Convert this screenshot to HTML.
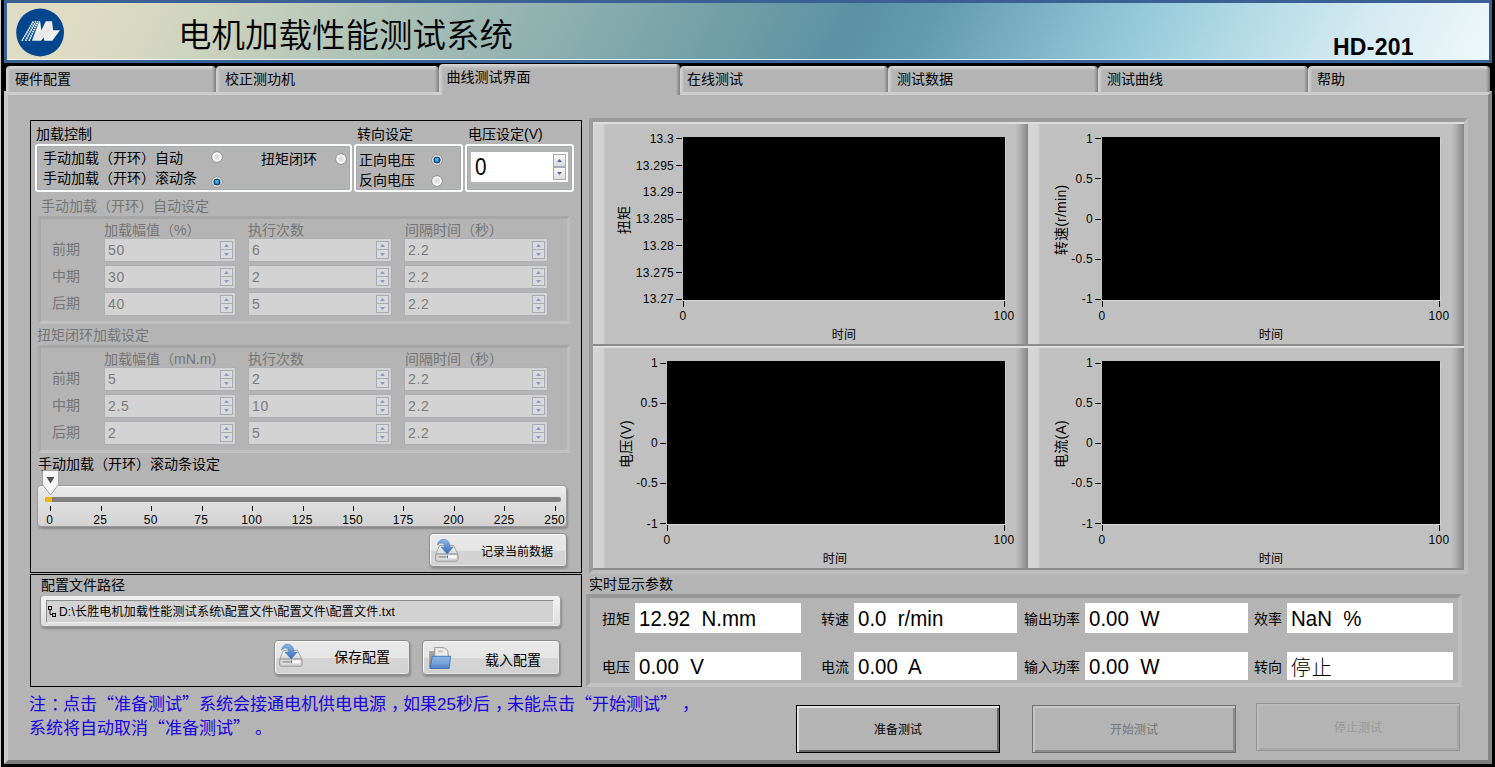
<!DOCTYPE html><html lang="zh-CN"><head><meta charset="utf-8"><title>电机加载性能测试系统</title><style>
*{box-sizing:border-box;margin:0;padding:0}
html,body{width:1495px;height:767px;overflow:hidden;background:#000}
body{text-spacing-trim:space-all;position:relative;font-family:"Liberation Sans","Noto Sans CJK SC",sans-serif;font-size:14px;color:#000}
.a{position:absolute}
.t{position:absolute;white-space:pre;line-height:1;font-size:14px}
.d{color:#747474}
.tab{position:absolute;top:66px;height:26px;border-radius:4px 4px 0 0;padding:4px 3px 0 4px;background:linear-gradient(90deg,#d6d6d6 0,#c8c8c8 2px,rgba(180,180,180,0) 4.5px),linear-gradient(270deg,#7e7e7e 0,#989898 2px,rgba(180,180,180,0) 4px),linear-gradient(#d8d8d8 0,#cacaca 2px,#b9b9b9 4px,#b4b4b4 5px)}
.tab span{position:absolute;margin:4px 0 0 4px;left:5px;top:2px;font-size:14px;line-height:1;white-space:nowrap}
.box{position:absolute;border:1px solid #000}
.grp{position:absolute;border:2px solid #fbfdfe;border-radius:3px;box-shadow:inset 0 0 0 1px #a9acae}
.sunk{position:absolute;background:#b4b4b4;border-top:3px solid #a6a6a6;border-left:3px solid #a9a9a9;border-bottom:3px solid #c2c2c2;border-right:3px solid #bebebe}
.din{position:absolute;height:22px;background:#d3d3d3;box-shadow:0 0 0 1px #adafb2}
.din span{position:absolute;left:3px;top:4px;font-size:14px;line-height:1;color:#7a7a7a;letter-spacing:0.6px}
.sp{position:absolute;width:13px;height:18px;right:2px;top:2px}
.btn{position:absolute;border-radius:4px;border:1px solid #8c8c8c;background:linear-gradient(#e9e9e9 0,#e5e5e5 51%,#d4d4d4 53%,#d2d2d2 100%);box-shadow:inset 1px 1px 0 #fbfbfb,inset -1px -1px 0 #e4e4e4,1px 2px 2px rgba(0,0,0,.22)}
.wb{position:absolute;background:#fff;height:29px}
.wb span{position:absolute;left:4px;top:4px;font-size:22px;line-height:1;white-space:pre;transform:scaleX(.93);transform-origin:0 0}
.wb span.stp{font-weight:300;font-size:20px;letter-spacing:1px;transform:none}
.chart{position:absolute;background:#c0c0c0}
q{font-family:"Noto Sans CJK SC",sans-serif;quotes:none}q::before,q::after{content:none}q.pc{position:relative;left:5px}
.tk{position:absolute;font-size:12px;line-height:1;white-space:nowrap;letter-spacing:0.25px}
.bb{position:absolute;background:#b4b4b4;font-size:12px;text-align:center}
</style></head><body>
<svg width="0" height="0" style="position:absolute"><defs><radialGradient id="rg" cx="50%" cy="45%" r="60%"><stop offset="0" stop-color="#d6d6d6"/><stop offset="1" stop-color="#f2f2f2"/></radialGradient><radialGradient id="rb" cx="45%" cy="40%" r="60%"><stop offset="0" stop-color="#58c4fa"/><stop offset="1" stop-color="#1478c0"/></radialGradient></defs></svg>
<div class="a" style="left:0;top:0;width:1px;height:767px;background:#cfcfcf"></div>
<div class="a" id="banner" style="left:4px;top:0;width:1488px;height:63px;border:3px solid #3a6094;background:linear-gradient(118deg,#e0dcc4 0%,#dfdcc4 5%,#d9d9c2 9%,#cdd3be 14%,#bdcaba 20%,#a9bfb5 27%,#99b6b1 33%,#82a8ab 41.7%,#6c9ca6 50%,#5a92a3 56.5%,#639cad 62%,#7db4c5 69%,#96cbda 76%,#b4dae6 82.6%,#d7ecf2 91.6%,#f0f8fa 100%)"><div class="a" style="left:0;right:0;bottom:0;height:1px;background:#f4f8fa"></div></div>
<svg class="a" style="left:14px;top:6px" width="54" height="54" viewBox="14 6 54 54"><circle cx="40.1" cy="32.5" r="23.9" fill="#00468e"/><defs><linearGradient id="lg" x1="0" y1="0" x2="1" y2="1"><stop offset="0" stop-color="#ffffff"/><stop offset="0.5" stop-color="#e6e6e6"/><stop offset="1" stop-color="#ffffff"/></linearGradient></defs><polygon fill="url(#lg)" points="31.9,40.8 39.2,21.2 40.1,21.2 41.4,30.2 45.8,21.2 52,21.2 53.2,30.2 60,30.2 52.3,40.8 44.3,40.8 43.7,37.5 41,40.8"/><g stroke="#fff" stroke-width="1.6" stroke-dasharray="1.7 0.6"><line x1="22" y1="40.8" x2="33.6" y2="21.2"/><line x1="25.5" y1="40.8" x2="35.8" y2="21.2"/><line x1="29" y1="40.8" x2="38" y2="21.2"/></g></svg>
<div class="t" style="left:178px;top:19px;font-size:33.5px;font-weight:350">电机加载性能测试系统</div>
<div class="t" style="left:1333px;top:36px;font-size:23px;font-weight:bold;letter-spacing:0.25px">HD-201</div>
<div class="a" style="left:4px;top:91px;width:1488px;height:673px;background:#b4b4b4;border-top:4px solid #cdcdcd;border-left:4px solid #cacaca;border-right:4px solid #868686;border-bottom:4px solid #7c7c7c"></div>
<div class="tab" style="left:6px;width:210px"><span style="left:5px">硬件配置</span></div>
<div class="tab" style="left:216px;width:222.5px"><span style="left:5px">校正测功机</span></div>
<div class="tab" style="left:680px;width:208px"><span style="left:3px">在线测试</span></div>
<div class="tab" style="left:888px;width:210px"><span style="left:5px">测试数据</span></div>
<div class="tab" style="left:1098px;width:210px"><span style="left:5px">测试曲线</span></div>
<div class="tab" style="left:1308px;width:181.5px"><span style="left:5px">帮助</span></div>
<div class="tab" style="left:438.5px;width:241.2px;top:64px;height:31px"><span style="left:4px;top:2px">曲线测试界面</span></div>
<div class="box" style="left:30px;top:120px;width:552px;height:453px"></div>
<div class="t" style="left:36px;top:127px">加载控制</div>
<div class="t" style="left:357px;top:127px">转向设定</div>
<div class="t" style="left:468px;top:127px">电压设定(V)</div>
<div class="grp" style="left:35px;top:144px;width:317px;height:48px"></div>
<div class="grp" style="left:354px;top:144px;width:109px;height:48px"></div>
<div class="grp" style="left:465px;top:144px;width:109px;height:48px"></div>
<div class="t" style="left:43px;top:151px">手动加载（开环）自动</div>
<div class="t" style="left:43px;top:171px">手动加载（开环）滚动条</div>
<div class="t" style="left:261px;top:152px">扭矩闭环</div>
<div class="t" style="left:359px;top:153px">正向电压</div>
<div class="t" style="left:359px;top:173px">反向电压</div>
<svg class="a" style="left:211px;top:151px" width="12" height="12" viewBox="0 0 12 12"><circle cx="6" cy="6" r="5.3" fill="#fff" stroke="#8f8f8f" stroke-width="1"/><circle cx="6" cy="6" r="3.4" fill="url(#rg)"/></svg>
<svg class="a" style="left:211px;top:176px" width="12" height="12" viewBox="0 0 12 12"><circle cx="6" cy="6" r="5.3" fill="#fff" stroke="#8f8f8f" stroke-width="1"/><circle cx="6" cy="6" r="3.6" fill="#0b3a62"/><circle cx="6" cy="6" r="2.4" fill="url(#rb)"/></svg>
<svg class="a" style="left:335px;top:153px" width="12" height="12" viewBox="0 0 12 12"><circle cx="6" cy="6" r="5.3" fill="#fff" stroke="#8f8f8f" stroke-width="1"/><circle cx="6" cy="6" r="3.4" fill="url(#rg)"/></svg>
<svg class="a" style="left:431px;top:154px" width="12" height="12" viewBox="0 0 12 12"><circle cx="6" cy="6" r="5.3" fill="#fff" stroke="#8f8f8f" stroke-width="1"/><circle cx="6" cy="6" r="3.6" fill="#0b3a62"/><circle cx="6" cy="6" r="2.4" fill="url(#rb)"/></svg>
<svg class="a" style="left:431px;top:175px" width="12" height="12" viewBox="0 0 12 12"><circle cx="6" cy="6" r="5.3" fill="#fff" stroke="#8f8f8f" stroke-width="1"/><circle cx="6" cy="6" r="3.4" fill="url(#rg)"/></svg>
<div class="a" style="left:471px;top:152px;width:97px;height:30px;background:#fff"><span class="t" style="left:3.5px;top:4px;font-size:23px;transform:scaleX(.9);transform-origin:0 0">0</span><div class="a" style="left:82px;top:2px;width:13px;height:13px;border:1px solid #a8acb8;background:linear-gradient(#f8f8f8,#dcdcdc)"><svg class="a" style="left:3px;top:4px" width="5" height="3"><polygon points="0,3 2.5,0 5,3" fill="#5560b0"/></svg></div><div class="a" style="left:82px;top:15px;width:13px;height:13px;border:1px solid #a8acb8;background:linear-gradient(#f8f8f8,#dcdcdc)"><svg class="a" style="left:3px;top:4px" width="5" height="3"><polygon points="0,0 2.5,3 5,0" fill="#5560b0"/></svg></div></div>
<div class="t d" style="left:41px;top:199px">手动加载（开环）自动设定</div>
<div class="sunk" style="left:38px;top:216px;width:532px;height:108px"></div>
<div class="t d" style="left:104px;top:223px">加载幅值（%）</div>
<div class="t d" style="left:248px;top:223px">执行次数</div>
<div class="t d" style="left:405px;top:223px">间隔时间（秒）</div>
<div class="t d" style="left:52px;top:242px">前期</div>
<div class="din" style="left:105px;top:239px;width:130px"><span>50</span><div class="sp"><div class="a" style="left:0;top:0;width:13px;height:9px;border:1px solid #a9abb3;background:#dadada"><svg class="a" style="left:3px;top:2px" width="5" height="3"><polygon points="0,3 2.5,0 5,3" fill="#8f96c4"/></svg></div><div class="a" style="left:0;top:8px;width:13px;height:10px;border:1px solid #a9abb3;background:#dadada"><svg class="a" style="left:3px;top:3px" width="5" height="3"><polygon points="0,0 2.5,3 5,0" fill="#8f96c4"/></svg></div></div></div>
<div class="din" style="left:249px;top:239px;width:142px"><span>6</span><div class="sp"><div class="a" style="left:0;top:0;width:13px;height:9px;border:1px solid #a9abb3;background:#dadada"><svg class="a" style="left:3px;top:2px" width="5" height="3"><polygon points="0,3 2.5,0 5,3" fill="#8f96c4"/></svg></div><div class="a" style="left:0;top:8px;width:13px;height:10px;border:1px solid #a9abb3;background:#dadada"><svg class="a" style="left:3px;top:3px" width="5" height="3"><polygon points="0,0 2.5,3 5,0" fill="#8f96c4"/></svg></div></div></div>
<div class="din" style="left:405px;top:239px;width:142px"><span>2.2</span><div class="sp"><div class="a" style="left:0;top:0;width:13px;height:9px;border:1px solid #a9abb3;background:#dadada"><svg class="a" style="left:3px;top:2px" width="5" height="3"><polygon points="0,3 2.5,0 5,3" fill="#8f96c4"/></svg></div><div class="a" style="left:0;top:8px;width:13px;height:10px;border:1px solid #a9abb3;background:#dadada"><svg class="a" style="left:3px;top:3px" width="5" height="3"><polygon points="0,0 2.5,3 5,0" fill="#8f96c4"/></svg></div></div></div>
<div class="t d" style="left:52px;top:269px">中期</div>
<div class="din" style="left:105px;top:266px;width:130px"><span>30</span><div class="sp"><div class="a" style="left:0;top:0;width:13px;height:9px;border:1px solid #a9abb3;background:#dadada"><svg class="a" style="left:3px;top:2px" width="5" height="3"><polygon points="0,3 2.5,0 5,3" fill="#8f96c4"/></svg></div><div class="a" style="left:0;top:8px;width:13px;height:10px;border:1px solid #a9abb3;background:#dadada"><svg class="a" style="left:3px;top:3px" width="5" height="3"><polygon points="0,0 2.5,3 5,0" fill="#8f96c4"/></svg></div></div></div>
<div class="din" style="left:249px;top:266px;width:142px"><span>2</span><div class="sp"><div class="a" style="left:0;top:0;width:13px;height:9px;border:1px solid #a9abb3;background:#dadada"><svg class="a" style="left:3px;top:2px" width="5" height="3"><polygon points="0,3 2.5,0 5,3" fill="#8f96c4"/></svg></div><div class="a" style="left:0;top:8px;width:13px;height:10px;border:1px solid #a9abb3;background:#dadada"><svg class="a" style="left:3px;top:3px" width="5" height="3"><polygon points="0,0 2.5,3 5,0" fill="#8f96c4"/></svg></div></div></div>
<div class="din" style="left:405px;top:266px;width:142px"><span>2.2</span><div class="sp"><div class="a" style="left:0;top:0;width:13px;height:9px;border:1px solid #a9abb3;background:#dadada"><svg class="a" style="left:3px;top:2px" width="5" height="3"><polygon points="0,3 2.5,0 5,3" fill="#8f96c4"/></svg></div><div class="a" style="left:0;top:8px;width:13px;height:10px;border:1px solid #a9abb3;background:#dadada"><svg class="a" style="left:3px;top:3px" width="5" height="3"><polygon points="0,0 2.5,3 5,0" fill="#8f96c4"/></svg></div></div></div>
<div class="t d" style="left:52px;top:296px">后期</div>
<div class="din" style="left:105px;top:293px;width:130px"><span>40</span><div class="sp"><div class="a" style="left:0;top:0;width:13px;height:9px;border:1px solid #a9abb3;background:#dadada"><svg class="a" style="left:3px;top:2px" width="5" height="3"><polygon points="0,3 2.5,0 5,3" fill="#8f96c4"/></svg></div><div class="a" style="left:0;top:8px;width:13px;height:10px;border:1px solid #a9abb3;background:#dadada"><svg class="a" style="left:3px;top:3px" width="5" height="3"><polygon points="0,0 2.5,3 5,0" fill="#8f96c4"/></svg></div></div></div>
<div class="din" style="left:249px;top:293px;width:142px"><span>5</span><div class="sp"><div class="a" style="left:0;top:0;width:13px;height:9px;border:1px solid #a9abb3;background:#dadada"><svg class="a" style="left:3px;top:2px" width="5" height="3"><polygon points="0,3 2.5,0 5,3" fill="#8f96c4"/></svg></div><div class="a" style="left:0;top:8px;width:13px;height:10px;border:1px solid #a9abb3;background:#dadada"><svg class="a" style="left:3px;top:3px" width="5" height="3"><polygon points="0,0 2.5,3 5,0" fill="#8f96c4"/></svg></div></div></div>
<div class="din" style="left:405px;top:293px;width:142px"><span>2.2</span><div class="sp"><div class="a" style="left:0;top:0;width:13px;height:9px;border:1px solid #a9abb3;background:#dadada"><svg class="a" style="left:3px;top:2px" width="5" height="3"><polygon points="0,3 2.5,0 5,3" fill="#8f96c4"/></svg></div><div class="a" style="left:0;top:8px;width:13px;height:10px;border:1px solid #a9abb3;background:#dadada"><svg class="a" style="left:3px;top:3px" width="5" height="3"><polygon points="0,0 2.5,3 5,0" fill="#8f96c4"/></svg></div></div></div>
<div class="t d" style="left:37px;top:328px">扭矩闭环加载设定</div>
<div class="sunk" style="left:38px;top:345px;width:532px;height:108px"></div>
<div class="t d" style="left:104px;top:352px">加载幅值（mN.m）</div>
<div class="t d" style="left:248px;top:352px">执行次数</div>
<div class="t d" style="left:405px;top:352px">间隔时间（秒）</div>
<div class="t d" style="left:52px;top:371px">前期</div>
<div class="din" style="left:105px;top:368px;width:130px"><span>5</span><div class="sp"><div class="a" style="left:0;top:0;width:13px;height:9px;border:1px solid #a9abb3;background:#dadada"><svg class="a" style="left:3px;top:2px" width="5" height="3"><polygon points="0,3 2.5,0 5,3" fill="#8f96c4"/></svg></div><div class="a" style="left:0;top:8px;width:13px;height:10px;border:1px solid #a9abb3;background:#dadada"><svg class="a" style="left:3px;top:3px" width="5" height="3"><polygon points="0,0 2.5,3 5,0" fill="#8f96c4"/></svg></div></div></div>
<div class="din" style="left:249px;top:368px;width:142px"><span>2</span><div class="sp"><div class="a" style="left:0;top:0;width:13px;height:9px;border:1px solid #a9abb3;background:#dadada"><svg class="a" style="left:3px;top:2px" width="5" height="3"><polygon points="0,3 2.5,0 5,3" fill="#8f96c4"/></svg></div><div class="a" style="left:0;top:8px;width:13px;height:10px;border:1px solid #a9abb3;background:#dadada"><svg class="a" style="left:3px;top:3px" width="5" height="3"><polygon points="0,0 2.5,3 5,0" fill="#8f96c4"/></svg></div></div></div>
<div class="din" style="left:405px;top:368px;width:142px"><span>2.2</span><div class="sp"><div class="a" style="left:0;top:0;width:13px;height:9px;border:1px solid #a9abb3;background:#dadada"><svg class="a" style="left:3px;top:2px" width="5" height="3"><polygon points="0,3 2.5,0 5,3" fill="#8f96c4"/></svg></div><div class="a" style="left:0;top:8px;width:13px;height:10px;border:1px solid #a9abb3;background:#dadada"><svg class="a" style="left:3px;top:3px" width="5" height="3"><polygon points="0,0 2.5,3 5,0" fill="#8f96c4"/></svg></div></div></div>
<div class="t d" style="left:52px;top:398px">中期</div>
<div class="din" style="left:105px;top:395px;width:130px"><span>2.5</span><div class="sp"><div class="a" style="left:0;top:0;width:13px;height:9px;border:1px solid #a9abb3;background:#dadada"><svg class="a" style="left:3px;top:2px" width="5" height="3"><polygon points="0,3 2.5,0 5,3" fill="#8f96c4"/></svg></div><div class="a" style="left:0;top:8px;width:13px;height:10px;border:1px solid #a9abb3;background:#dadada"><svg class="a" style="left:3px;top:3px" width="5" height="3"><polygon points="0,0 2.5,3 5,0" fill="#8f96c4"/></svg></div></div></div>
<div class="din" style="left:249px;top:395px;width:142px"><span>10</span><div class="sp"><div class="a" style="left:0;top:0;width:13px;height:9px;border:1px solid #a9abb3;background:#dadada"><svg class="a" style="left:3px;top:2px" width="5" height="3"><polygon points="0,3 2.5,0 5,3" fill="#8f96c4"/></svg></div><div class="a" style="left:0;top:8px;width:13px;height:10px;border:1px solid #a9abb3;background:#dadada"><svg class="a" style="left:3px;top:3px" width="5" height="3"><polygon points="0,0 2.5,3 5,0" fill="#8f96c4"/></svg></div></div></div>
<div class="din" style="left:405px;top:395px;width:142px"><span>2.2</span><div class="sp"><div class="a" style="left:0;top:0;width:13px;height:9px;border:1px solid #a9abb3;background:#dadada"><svg class="a" style="left:3px;top:2px" width="5" height="3"><polygon points="0,3 2.5,0 5,3" fill="#8f96c4"/></svg></div><div class="a" style="left:0;top:8px;width:13px;height:10px;border:1px solid #a9abb3;background:#dadada"><svg class="a" style="left:3px;top:3px" width="5" height="3"><polygon points="0,0 2.5,3 5,0" fill="#8f96c4"/></svg></div></div></div>
<div class="t d" style="left:52px;top:425px">后期</div>
<div class="din" style="left:105px;top:422px;width:130px"><span>2</span><div class="sp"><div class="a" style="left:0;top:0;width:13px;height:9px;border:1px solid #a9abb3;background:#dadada"><svg class="a" style="left:3px;top:2px" width="5" height="3"><polygon points="0,3 2.5,0 5,3" fill="#8f96c4"/></svg></div><div class="a" style="left:0;top:8px;width:13px;height:10px;border:1px solid #a9abb3;background:#dadada"><svg class="a" style="left:3px;top:3px" width="5" height="3"><polygon points="0,0 2.5,3 5,0" fill="#8f96c4"/></svg></div></div></div>
<div class="din" style="left:249px;top:422px;width:142px"><span>5</span><div class="sp"><div class="a" style="left:0;top:0;width:13px;height:9px;border:1px solid #a9abb3;background:#dadada"><svg class="a" style="left:3px;top:2px" width="5" height="3"><polygon points="0,3 2.5,0 5,3" fill="#8f96c4"/></svg></div><div class="a" style="left:0;top:8px;width:13px;height:10px;border:1px solid #a9abb3;background:#dadada"><svg class="a" style="left:3px;top:3px" width="5" height="3"><polygon points="0,0 2.5,3 5,0" fill="#8f96c4"/></svg></div></div></div>
<div class="din" style="left:405px;top:422px;width:142px"><span>2.2</span><div class="sp"><div class="a" style="left:0;top:0;width:13px;height:9px;border:1px solid #a9abb3;background:#dadada"><svg class="a" style="left:3px;top:2px" width="5" height="3"><polygon points="0,3 2.5,0 5,3" fill="#8f96c4"/></svg></div><div class="a" style="left:0;top:8px;width:13px;height:10px;border:1px solid #a9abb3;background:#dadada"><svg class="a" style="left:3px;top:3px" width="5" height="3"><polygon points="0,0 2.5,3 5,0" fill="#8f96c4"/></svg></div></div></div>
<div class="t" style="left:38px;top:457px">手动加载（开环）滚动条设定</div>
<div class="a" style="left:37px;top:485px;width:530px;height:42px;border-radius:4px;border:1px solid #9a9a9a;background:linear-gradient(#ececec 0,#e2e2e2 30%,#d2d2d2 100%);box-shadow:inset 0 1px 0 #fafafa,1px 2px 2px rgba(0,0,0,.25)"></div>
<div class="a" style="left:45px;top:497px;width:516px;height:5px;background:#808080;border-radius:2px"></div>
<div class="a" style="left:45px;top:497px;width:7px;height:5px;background:#f5b400;border-radius:2px 0 0 2px"></div>
<div class="a" style="left:50.0px;top:506px;width:1px;height:5px;background:#000"></div>
<div class="tk" style="left:29.7px;top:514px;width:40px;text-align:center">0</div>
<div class="a" style="left:100.5px;top:506px;width:1px;height:5px;background:#000"></div>
<div class="tk" style="left:80.2px;top:514px;width:40px;text-align:center">25</div>
<div class="a" style="left:151.0px;top:506px;width:1px;height:5px;background:#000"></div>
<div class="tk" style="left:130.7px;top:514px;width:40px;text-align:center">50</div>
<div class="a" style="left:201.5px;top:506px;width:1px;height:5px;background:#000"></div>
<div class="tk" style="left:181.2px;top:514px;width:40px;text-align:center">75</div>
<div class="a" style="left:252.0px;top:506px;width:1px;height:5px;background:#000"></div>
<div class="tk" style="left:231.7px;top:514px;width:40px;text-align:center">100</div>
<div class="a" style="left:302.5px;top:506px;width:1px;height:5px;background:#000"></div>
<div class="tk" style="left:282.2px;top:514px;width:40px;text-align:center">125</div>
<div class="a" style="left:352.9px;top:506px;width:1px;height:5px;background:#000"></div>
<div class="tk" style="left:332.6px;top:514px;width:40px;text-align:center">150</div>
<div class="a" style="left:403.4px;top:506px;width:1px;height:5px;background:#000"></div>
<div class="tk" style="left:383.1px;top:514px;width:40px;text-align:center">175</div>
<div class="a" style="left:453.9px;top:506px;width:1px;height:5px;background:#000"></div>
<div class="tk" style="left:433.6px;top:514px;width:40px;text-align:center">200</div>
<div class="a" style="left:504.4px;top:506px;width:1px;height:5px;background:#000"></div>
<div class="tk" style="left:484.1px;top:514px;width:40px;text-align:center">225</div>
<div class="a" style="left:554.9px;top:506px;width:1px;height:5px;background:#000"></div>
<div class="tk" style="left:534.6px;top:514px;width:40px;text-align:center">250</div>
<svg class="a" style="left:41px;top:469px" width="20" height="28" viewBox="0 0 20 28"><path d="M2.5,1.5 h14 a1,1 0 0 1 1,1 v13 l-8,10.5 l-8,-10.5 v-13 a1,1 0 0 1 1,-1z" fill="#f6f6f6" stroke="#a0a0a0" stroke-width="1"/><polygon points="5.5,8 13.5,8 9.5,14.5" fill="#505050"/></svg>
<div class="btn" style="left:429px;top:533px;width:138px;height:34px"></div>
<div class="t" style="left:481px;top:546px;font-size:12px">记录当前数据</div>
<svg class="a" style="left:434px;top:538px" width="26" height="25" viewBox="0 0 26 25"><defs><linearGradient id="g1" x1="0" y1="0" x2="0" y2="1"><stop offset="0" stop-color="#8fb6e2"/><stop offset="1" stop-color="#2f6cba"/></linearGradient><linearGradient id="g1t" x1="0" y1="0" x2="0" y2="1"><stop offset="0" stop-color="#f4f4f4"/><stop offset="1" stop-color="#d8d8d8"/></linearGradient></defs><path d="M5.6,7.4 h13.9 l4.5,8.8 h-22.3z" fill="url(#g1t)" stroke="#9a9a9a" stroke-width="0.9"/><rect x="1.7" y="16" width="22.3" height="7.2" rx="1.6" fill="#d6d6d6" stroke="#8e8e8e" stroke-width="0.9"/><rect x="4" y="17.4" width="18.4" height="2.8" fill="#fff"/><rect x="4.3" y="17.7" width="8.2" height="2.2" fill="#a6a6a6"/><rect x="12.9" y="17.4" width="0.8" height="2.8" fill="#333"/><path d="M3.6,7.2 C4,3 7,1.2 9.9,1.3 C13.6,1.5 15.9,4.5 15.9,9 L19.3,9 L13.2,15.9 L6.9,9 L10.8,9 C10.8,6.5 9.5,5 7.8,5 C6,5 4.5,5.8 3.6,7.2 Z" fill="url(#g1)" stroke="#3a6cb0" stroke-width=".5"/></svg>
<div class="box" style="left:30px;top:574px;width:552px;height:113px"></div>
<div class="t" style="left:41px;top:578px">配置文件路径</div>
<div class="a" style="left:40px;top:595px;width:521px;height:32px;border-radius:4px;border:1px solid #9a9a9a;border-top-color:#b4b4b4;background:linear-gradient(#f2f2f2,#dedede);box-shadow:1px 2px 2px rgba(0,0,0,.25)"></div>
<div class="a" style="left:46px;top:600px;width:508px;height:23px;background:#d2d2d2;border:1px solid #8c8c8c;border-right-color:#f0f0f0;border-bottom-color:#f0f0f0"></div>
<svg class="a" style="left:47px;top:605px" width="10" height="14" viewBox="0 0 10 14"><rect x="1.5" y="1.5" width="3" height="3" fill="none" stroke="#000"/><path d="M3,5 v4.5 h2" fill="none" stroke="#000"/><rect x="5.5" y="8.5" width="3" height="3" fill="none" stroke="#000"/></svg>
<div class="t" style="left:59px;top:606px;font-size:12px;letter-spacing:0.2px">D:\长胜电机加载性能测试系统\配置文件\配置文件\配置文件.txt</div>
<div class="btn" style="left:274px;top:640px;width:136px;height:35px"></div>
<div class="btn" style="left:422px;top:640px;width:138px;height:35px"></div>
<div class="t" style="left:334px;top:650px">保存配置</div>
<div class="t" style="left:485px;top:653px">载入配置</div>
<svg class="a" style="left:278px;top:643px" width="26" height="25" viewBox="0 0 26 25"><defs><linearGradient id="g2" x1="0" y1="0" x2="0" y2="1"><stop offset="0" stop-color="#8fb6e2"/><stop offset="1" stop-color="#2f6cba"/></linearGradient><linearGradient id="g2t" x1="0" y1="0" x2="0" y2="1"><stop offset="0" stop-color="#f4f4f4"/><stop offset="1" stop-color="#d8d8d8"/></linearGradient></defs><path d="M5.6,7.4 h13.9 l4.5,8.8 h-22.3z" fill="url(#g2t)" stroke="#9a9a9a" stroke-width="0.9"/><rect x="1.7" y="16" width="22.3" height="7.2" rx="1.6" fill="#d6d6d6" stroke="#8e8e8e" stroke-width="0.9"/><rect x="4" y="17.4" width="18.4" height="2.8" fill="#fff"/><rect x="4.3" y="17.7" width="8.2" height="2.2" fill="#a6a6a6"/><rect x="12.9" y="17.4" width="0.8" height="2.8" fill="#333"/><path d="M3.6,7.2 C4,3 7,1.2 9.9,1.3 C13.6,1.5 15.9,4.5 15.9,9 L19.3,9 L13.2,15.9 L6.9,9 L10.8,9 C10.8,6.5 9.5,5 7.8,5 C6,5 4.5,5.8 3.6,7.2 Z" fill="url(#g2)" stroke="#3a6cb0" stroke-width=".5"/></svg>
<svg class="a" style="left:428px;top:646px" width="24" height="24" viewBox="0 0 24 24"><defs><linearGradient id="g3" x1="0" y1="0" x2="0" y2="1"><stop offset="0" stop-color="#8db4e4"/><stop offset="0.5" stop-color="#7aa6dc"/><stop offset="1" stop-color="#4c82c8"/></linearGradient><linearGradient id="g4" x1="0" y1="0" x2="0" y2="1"><stop offset="0" stop-color="#a8a8a8"/><stop offset="1" stop-color="#808080"/></linearGradient></defs><rect x="1.2" y="5" width="6.5" height="17.5" fill="url(#g4)"/><path d="M6.7,1.6 h7.3 q6.2,0.4 6.2,6.6 v3 h-13.5z" fill="#ececec" stroke="#8c8c8c" stroke-width="0.9"/><rect x="10" y="4.5" width="5" height="2" fill="#c4c4c4"/><polygon points="4.2,10.3 22.5,10.3 21.2,22.5 2.4,22.5" fill="url(#g3)" stroke="#3d70b8" stroke-width="0.9"/></svg>
<div class="t" style="left:29px;top:694px;font-size:17px;color:#1a00e0">注<q class="pc">：</q>点击<q>“</q>准备测试<q>”</q>系统会接通电机供电电源<q class="pc">，</q>如果25秒后<q class="pc">，</q>未能点击<q>“</q>开始测试<q>”</q><q class="pc">，</q></div>
<div class="t" style="left:29px;top:718px;font-size:17px;color:#1a00e0">系统将自动取消<q>“</q>准备测试<q>”</q><q class="pc">。</q></div>
<div class="a" style="left:589px;top:118px;width:879px;height:456px;border-top:4px solid #9b9b9b;border-left:4px solid #9b9b9b;border-bottom:4px solid #bebebe;border-right:4px solid #bebebe;background:#acacac"></div>
<div class="chart" style="left:593px;top:122px;width:434.5px;height:224px;background:linear-gradient(90deg,#d6d6d6 0,#d2d2d2 10px,#c0c0c0 12.5px,#c0c0c0 calc(100% - 13px),#b4b4b4 calc(100% - 9px),#9a9a9a calc(100% - 4px),#848484 100%);border-top:2px solid #dedede;border-bottom:2px solid #8c8c8c"></div>
<div class="a" style="left:683px;top:137px;width:323px;height:164px;background:#000;border-bottom:1px solid #d8d8d8;border-right:1px solid #d0d0d0"></div>
<div class="a" style="left:676px;top:138.3px;width:6px;height:1px;background:#000"></div>
<div class="tk" style="left:614px;top:132.8px;width:60px;text-align:right">13.3</div>
<div class="a" style="left:676px;top:165.1px;width:6px;height:1px;background:#000"></div>
<div class="tk" style="left:614px;top:159.6px;width:60px;text-align:right">13.295</div>
<div class="a" style="left:676px;top:191.9px;width:6px;height:1px;background:#000"></div>
<div class="tk" style="left:614px;top:186.4px;width:60px;text-align:right">13.29</div>
<div class="a" style="left:676px;top:218.6px;width:6px;height:1px;background:#000"></div>
<div class="tk" style="left:614px;top:213.1px;width:60px;text-align:right">13.285</div>
<div class="a" style="left:676px;top:245.3px;width:6px;height:1px;background:#000"></div>
<div class="tk" style="left:614px;top:239.8px;width:60px;text-align:right">13.28</div>
<div class="a" style="left:676px;top:272.0px;width:6px;height:1px;background:#000"></div>
<div class="tk" style="left:614px;top:266.5px;width:60px;text-align:right">13.275</div>
<div class="a" style="left:676px;top:298.8px;width:6px;height:1px;background:#000"></div>
<div class="tk" style="left:614px;top:293.3px;width:60px;text-align:right">13.27</div>
<div class="a" style="left:683px;top:301px;width:1px;height:6px;background:#000"></div>
<div class="tk" style="left:663px;top:310px;width:40px;text-align:center">0</div>
<div class="a" style="left:1004px;top:301px;width:1px;height:6px;background:#000"></div>
<div class="tk" style="left:984px;top:310px;width:40px;text-align:center">100</div>
<div class="tk" style="left:814px;top:329px;width:60px;text-align:center">时间</div>
<div class="tk" style="left:564px;top:213px;width:120px;height:14px;font-size:14px;text-align:center;transform:rotate(-90deg);transform-origin:50% 50%">扭矩</div>
<div class="chart" style="left:1027.5px;top:122px;width:436.5px;height:224px;background:linear-gradient(90deg,#d6d6d6 0,#d2d2d2 10px,#c0c0c0 12.5px,#c0c0c0 calc(100% - 13px),#b4b4b4 calc(100% - 9px),#9a9a9a calc(100% - 4px),#848484 100%);border-top:2px solid #dedede;border-bottom:2px solid #8c8c8c"></div>
<div class="a" style="left:1102px;top:137px;width:339px;height:164px;background:#000;border-bottom:1px solid #d8d8d8;border-right:1px solid #d0d0d0"></div>
<div class="a" style="left:1095px;top:138.3px;width:6px;height:1px;background:#000"></div>
<div class="tk" style="left:1033px;top:132.8px;width:60px;text-align:right">1</div>
<div class="a" style="left:1095px;top:178.4px;width:6px;height:1px;background:#000"></div>
<div class="tk" style="left:1033px;top:172.9px;width:60px;text-align:right">0.5</div>
<div class="a" style="left:1095px;top:218.6px;width:6px;height:1px;background:#000"></div>
<div class="tk" style="left:1033px;top:213.1px;width:60px;text-align:right">0</div>
<div class="a" style="left:1095px;top:258.7px;width:6px;height:1px;background:#000"></div>
<div class="tk" style="left:1033px;top:253.2px;width:60px;text-align:right">-0.5</div>
<div class="a" style="left:1095px;top:298.8px;width:6px;height:1px;background:#000"></div>
<div class="tk" style="left:1033px;top:293.3px;width:60px;text-align:right">-1</div>
<div class="a" style="left:1102px;top:301px;width:1px;height:6px;background:#000"></div>
<div class="tk" style="left:1082px;top:310px;width:40px;text-align:center">0</div>
<div class="a" style="left:1439px;top:301px;width:1px;height:6px;background:#000"></div>
<div class="tk" style="left:1419px;top:310px;width:40px;text-align:center">100</div>
<div class="tk" style="left:1241px;top:329px;width:60px;text-align:center">时间</div>
<div class="tk" style="left:1001px;top:213px;width:120px;height:14px;font-size:14px;text-align:center;transform:rotate(-90deg);transform-origin:50% 50%">转速(r/min)</div>
<div class="chart" style="left:593px;top:346px;width:434.5px;height:224px;background:linear-gradient(90deg,#d6d6d6 0,#d2d2d2 10px,#c0c0c0 12.5px,#c0c0c0 calc(100% - 13px),#b4b4b4 calc(100% - 9px),#9a9a9a calc(100% - 4px),#848484 100%);border-top:2px solid #dedede;border-bottom:2px solid #8c8c8c"></div>
<div class="a" style="left:667px;top:361px;width:339px;height:164px;background:#000;border-bottom:1px solid #d8d8d8;border-right:1px solid #d0d0d0"></div>
<div class="a" style="left:660px;top:362.5px;width:6px;height:1px;background:#000"></div>
<div class="tk" style="left:598px;top:357.0px;width:60px;text-align:right">1</div>
<div class="a" style="left:660px;top:402.6px;width:6px;height:1px;background:#000"></div>
<div class="tk" style="left:598px;top:397.1px;width:60px;text-align:right">0.5</div>
<div class="a" style="left:660px;top:442.8px;width:6px;height:1px;background:#000"></div>
<div class="tk" style="left:598px;top:437.3px;width:60px;text-align:right">0</div>
<div class="a" style="left:660px;top:482.9px;width:6px;height:1px;background:#000"></div>
<div class="tk" style="left:598px;top:477.4px;width:60px;text-align:right">-0.5</div>
<div class="a" style="left:660px;top:523.0px;width:6px;height:1px;background:#000"></div>
<div class="tk" style="left:598px;top:517.5px;width:60px;text-align:right">-1</div>
<div class="a" style="left:667px;top:525px;width:1px;height:6px;background:#000"></div>
<div class="tk" style="left:647px;top:534px;width:40px;text-align:center">0</div>
<div class="a" style="left:1004px;top:525px;width:1px;height:6px;background:#000"></div>
<div class="tk" style="left:984px;top:534px;width:40px;text-align:center">100</div>
<div class="tk" style="left:805px;top:553px;width:60px;text-align:center">时间</div>
<div class="tk" style="left:566px;top:437px;width:120px;height:14px;font-size:14px;text-align:center;transform:rotate(-90deg);transform-origin:50% 50%">电压(V)</div>
<div class="chart" style="left:1027.5px;top:346px;width:436.5px;height:224px;background:linear-gradient(90deg,#d6d6d6 0,#d2d2d2 10px,#c0c0c0 12.5px,#c0c0c0 calc(100% - 13px),#b4b4b4 calc(100% - 9px),#9a9a9a calc(100% - 4px),#848484 100%);border-top:2px solid #dedede;border-bottom:2px solid #8c8c8c"></div>
<div class="a" style="left:1102px;top:361px;width:339px;height:164px;background:#000;border-bottom:1px solid #d8d8d8;border-right:1px solid #d0d0d0"></div>
<div class="a" style="left:1095px;top:362.5px;width:6px;height:1px;background:#000"></div>
<div class="tk" style="left:1033px;top:357.0px;width:60px;text-align:right">1</div>
<div class="a" style="left:1095px;top:402.6px;width:6px;height:1px;background:#000"></div>
<div class="tk" style="left:1033px;top:397.1px;width:60px;text-align:right">0.5</div>
<div class="a" style="left:1095px;top:442.8px;width:6px;height:1px;background:#000"></div>
<div class="tk" style="left:1033px;top:437.3px;width:60px;text-align:right">0</div>
<div class="a" style="left:1095px;top:482.9px;width:6px;height:1px;background:#000"></div>
<div class="tk" style="left:1033px;top:477.4px;width:60px;text-align:right">-0.5</div>
<div class="a" style="left:1095px;top:523.0px;width:6px;height:1px;background:#000"></div>
<div class="tk" style="left:1033px;top:517.5px;width:60px;text-align:right">-1</div>
<div class="a" style="left:1102px;top:525px;width:1px;height:6px;background:#000"></div>
<div class="tk" style="left:1082px;top:534px;width:40px;text-align:center">0</div>
<div class="a" style="left:1439px;top:525px;width:1px;height:6px;background:#000"></div>
<div class="tk" style="left:1419px;top:534px;width:40px;text-align:center">100</div>
<div class="tk" style="left:1241px;top:553px;width:60px;text-align:center">时间</div>
<div class="tk" style="left:1001px;top:437px;width:120px;height:14px;font-size:14px;text-align:center;transform:rotate(-90deg);transform-origin:50% 50%">电流(A)</div>
<div class="t" style="left:589px;top:577px">实时显示参数</div>
<div class="sunk" style="left:586px;top:594px;width:876px;height:93px;border-width:4px;border-top-color:#989898;border-left-color:#9c9c9c"></div>
<div class="t" style="left:602px;top:612px">扭矩</div>
<div class="wb" style="left:634.8px;top:603px;width:166.2px;height:30px"><span style="top:5px">12.92  N.mm</span></div>
<div class="t" style="left:821px;top:612px">转速</div>
<div class="wb" style="left:854.2px;top:603px;width:163.1px;height:30px"><span style="top:5px">0.0  r/min</span></div>
<div class="t" style="left:1024px;top:612px">输出功率</div>
<div class="wb" style="left:1084.6px;top:603px;width:163.7px;height:30px"><span style="top:5px">0.00  W</span></div>
<div class="t" style="left:1254px;top:612px">效率</div>
<div class="wb" style="left:1286.7px;top:603px;width:166.6px;height:30px"><span style="top:5px">NaN  %</span></div>
<div class="t" style="left:602px;top:660px">电压</div>
<div class="wb" style="left:634.8px;top:652px;width:166.2px;height:28px"><span style="top:4px">0.00  V</span></div>
<div class="t" style="left:821px;top:660px">电流</div>
<div class="wb" style="left:854.2px;top:652px;width:163.1px;height:28px"><span style="top:4px">0.00  A</span></div>
<div class="t" style="left:1024px;top:660px">输入功率</div>
<div class="wb" style="left:1084.6px;top:652px;width:163.7px;height:28px"><span style="top:4px">0.00  W</span></div>
<div class="t" style="left:1254px;top:660px">转向</div>
<div class="wb" style="left:1286.7px;top:652px;width:166.6px;height:28px"><span style="top:6px" class="stp">停止</span></div>
<div class="bb" style="left:796px;top:705px;width:204px;height:48px;border:1px solid #000;box-shadow:inset 2px 2px 0 #e2e2e2,inset -2px -2px 0 #686868"><span class="t" style="left:0;right:0;top:18px;font-size:12px;text-align:center">准备测试</span></div>
<div class="bb" style="left:1032px;top:705px;width:204px;height:48px;border:1px solid #707070;box-shadow:inset 2px 2px 0 #c6c6c6,inset -2px -2px 0 #8c8c8c"><span class="t" style="left:0;right:0;top:18px;font-size:12px;text-align:center;color:#767676">开始测试</span></div>
<div class="bb" style="left:1256px;top:703px;width:204px;height:48px;border:1px solid #949494;box-shadow:inset 2px 2px 0 #bcbcbc,inset -2px -2px 0 #a6a6a6"><span class="t" style="left:0;right:0;top:18px;font-size:12px;text-align:center;color:#989898">停止测试</span></div>
</body></html>
